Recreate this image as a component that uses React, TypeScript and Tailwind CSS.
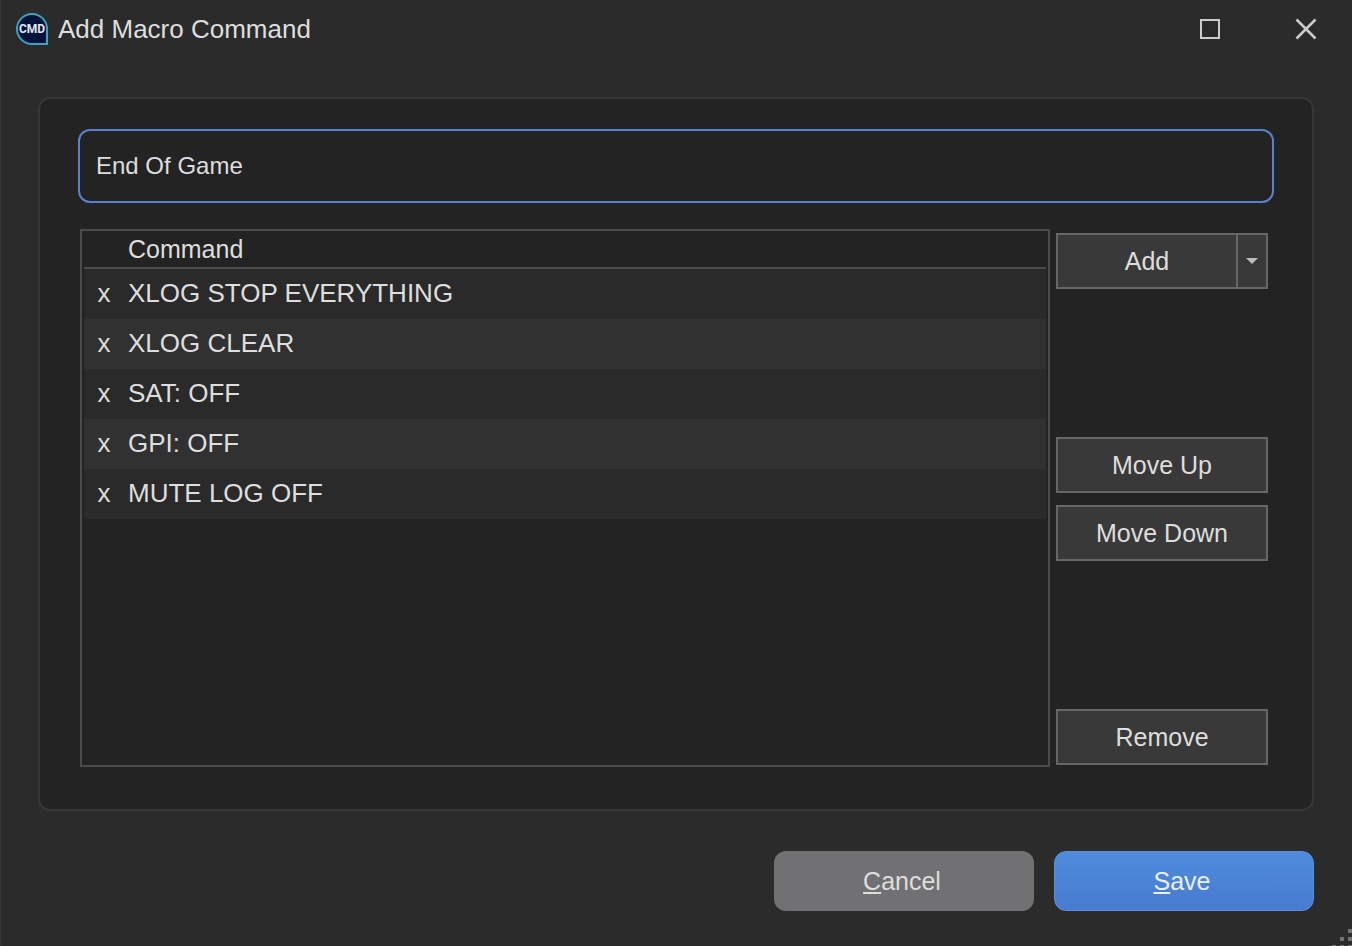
import { useState } from 'react';

type Command = { id: number; name: string };

const initialCommands: Command[] = [
  { id: 1, name: 'XLOG STOP EVERYTHING' },
  { id: 2, name: 'XLOG CLEAR' },
  { id: 3, name: 'SAT: OFF' },
  { id: 4, name: 'GPI: OFF' },
  { id: 5, name: 'MUTE LOG OFF' },
];

const sideButton = 'h-14 w-full border-2 border-[#666666] bg-[#393939] text-center';

function AppLogo() {
  return (
    <svg width="32" height="32" viewBox="0 0 32 32" aria-hidden="true">
      <path d="M16 1A15 15 0 0 0 1 16A15 15 0 0 0 16 31H31V16A15 15 0 0 0 16 1Z" fill="#04133c" stroke="#3fa3bd" strokeWidth="2" />
      <text x="16" y="20" textAnchor="middle" fontSize="12" fontWeight="700" fill="#e6e8ee" fontFamily="Roboto, sans-serif">
        CMD
      </text>
    </svg>
  );
}

function TitleBar() {
  return (
    <header className="flex h-[58px] items-center gap-1 pl-4">
      <AppLogo />
      <h1 className="ml-1.5 flex-1 text-[26px] leading-8">Add Macro Command</h1>
      <button type="button" aria-label="Maximize" className="flex h-full w-[92px] items-center justify-center">
        <svg width="22" height="22" viewBox="0 0 22 22" fill="none" stroke="#cccccc" strokeWidth="2">
          <rect x="2" y="2" width="18" height="18" />
        </svg>
      </button>
      <button type="button" aria-label="Close" className="flex h-full w-[92px] items-center justify-center">
        <svg width="22" height="22" viewBox="0 0 22 22" fill="none" stroke="#cccccc" strokeWidth="2.5">
          <path d="M1.5 1.5L20.5 20.5M20.5 1.5L1.5 20.5" />
        </svg>
      </button>
    </header>
  );
}

function SizeGrip() {
  return (
    <svg className="absolute right-0 bottom-0" width="20" height="17" viewBox="0 0 20 17" fill="#707070" aria-hidden="true">
      <rect x="16" y="0" width="4" height="4" />
      <rect x="8" y="8" width="4" height="4" />
      <rect x="16" y="8" width="4" height="4" />
      <rect x="0" y="16" width="4" height="1" />
      <rect x="8" y="16" width="4" height="1" />
      <rect x="16" y="16" width="4" height="1" />
    </svg>
  );
}

export default function App() {
  const [name, setName] = useState('End Of Game');
  const [commands, setCommands] = useState(initialCommands);
  const [selected, setSelected] = useState<number | null>(null);

  const move = (step: number) => {
    const from = commands.findIndex((c) => c.id === selected);
    const to = from + step;
    if (from < 0 || to < 0 || to >= commands.length) return;
    const next = [...commands];
    [next[from], next[to]] = [next[to], next[from]];
    setCommands(next);
  };

  const remove = (id: number | null) => setCommands(commands.filter((c) => c.id !== id));

  return (
    <div className="relative flex min-h-screen flex-col bg-[#2b2b2b] font-['Liberation_Sans',Arial,sans-serif] text-[25px] leading-8 text-[#dedede] shadow-[inset_1px_0_0_#363636]">
      <TitleBar />

      <main className="mx-[38px] mt-[39px] flex flex-1 flex-col rounded-xl border-2 border-[#373737] bg-[#232323] px-[38px] pt-[30px] pb-[42px]">
        <input
          type="text"
          aria-label="Macro name"
          value={name}
          onChange={(e) => setName(e.target.value)}
          className="h-[74px] w-full rounded-xl border-2 border-[#5c80cc] bg-transparent px-4 text-2xl outline-none"
        />

        <div className="mt-[26px] ml-0.5 flex flex-1 gap-1.5">
          <div className="flex-1 border-2 border-[#4b4b4b] px-0.5">
            <table className="w-full table-fixed border-separate border-spacing-0">
              <thead>
                <tr className="h-[38px]">
                  <td className="w-11 border-b-2 border-[#4b4b4b]" />
                  <th scope="col" className="border-b-2 border-[#4b4b4b] text-left font-normal">
                    Command
                  </th>
                </tr>
              </thead>
              <tbody className="text-[26px]">
                {commands.map((c) => (
                  <tr key={c.id} onClick={() => setSelected(c.id)} className="h-[50px] odd:bg-[#2a2a2a] even:bg-[#313131]">
                    <td className="pb-0.5 pl-3">
                      <button type="button" aria-label={`Delete ${c.name}`} onClick={() => remove(c.id)} className="block w-4">
                        x
                      </button>
                    </td>
                    <td className="pb-0.5">{c.name}</td>
                  </tr>
                ))}
              </tbody>
            </table>
          </div>

          <div className="mr-1.5 flex w-[212px] flex-col justify-between pt-1 pb-0.5">
            <div className="flex h-14 border-2 border-[#666666] bg-[#393939]">
              <button type="button" className="flex-1">
                Add
              </button>
              <button type="button" aria-label="More add options" className="flex w-[30px] items-center justify-center border-l-2 border-[#666666]">
                <svg width="12" height="6" viewBox="0 0 12 6" fill="#bdbdbd" aria-hidden="true">
                  <path d="M0 0H12L6 6Z" />
                </svg>
              </button>
            </div>
            <div className="flex flex-col gap-3">
              <button type="button" className={sideButton} onClick={() => move(-1)}>
                Move Up
              </button>
              <button type="button" className={sideButton} onClick={() => move(1)}>
                Move Down
              </button>
            </div>
            <button type="button" className={sideButton} onClick={() => remove(selected)}>
              Remove
            </button>
          </div>
        </div>
      </main>

      <footer className="mx-[38px] mt-10 mb-[35px] flex justify-end gap-5">
        <button type="button" className="h-15 w-[260px] rounded-xl bg-[#717173] pr-1">
          <span className="underline underline-offset-2">C</span>ancel
        </button>
        <button type="button" className="h-15 w-[260px] rounded-xl border border-[#5890e2] bg-linear-to-b from-[#4f8cdd] to-[#477bd0] pr-1 text-[#e8eefa]">
          <span className="underline underline-offset-2">S</span>ave
        </button>
      </footer>

      <SizeGrip />
    </div>
  );
}
